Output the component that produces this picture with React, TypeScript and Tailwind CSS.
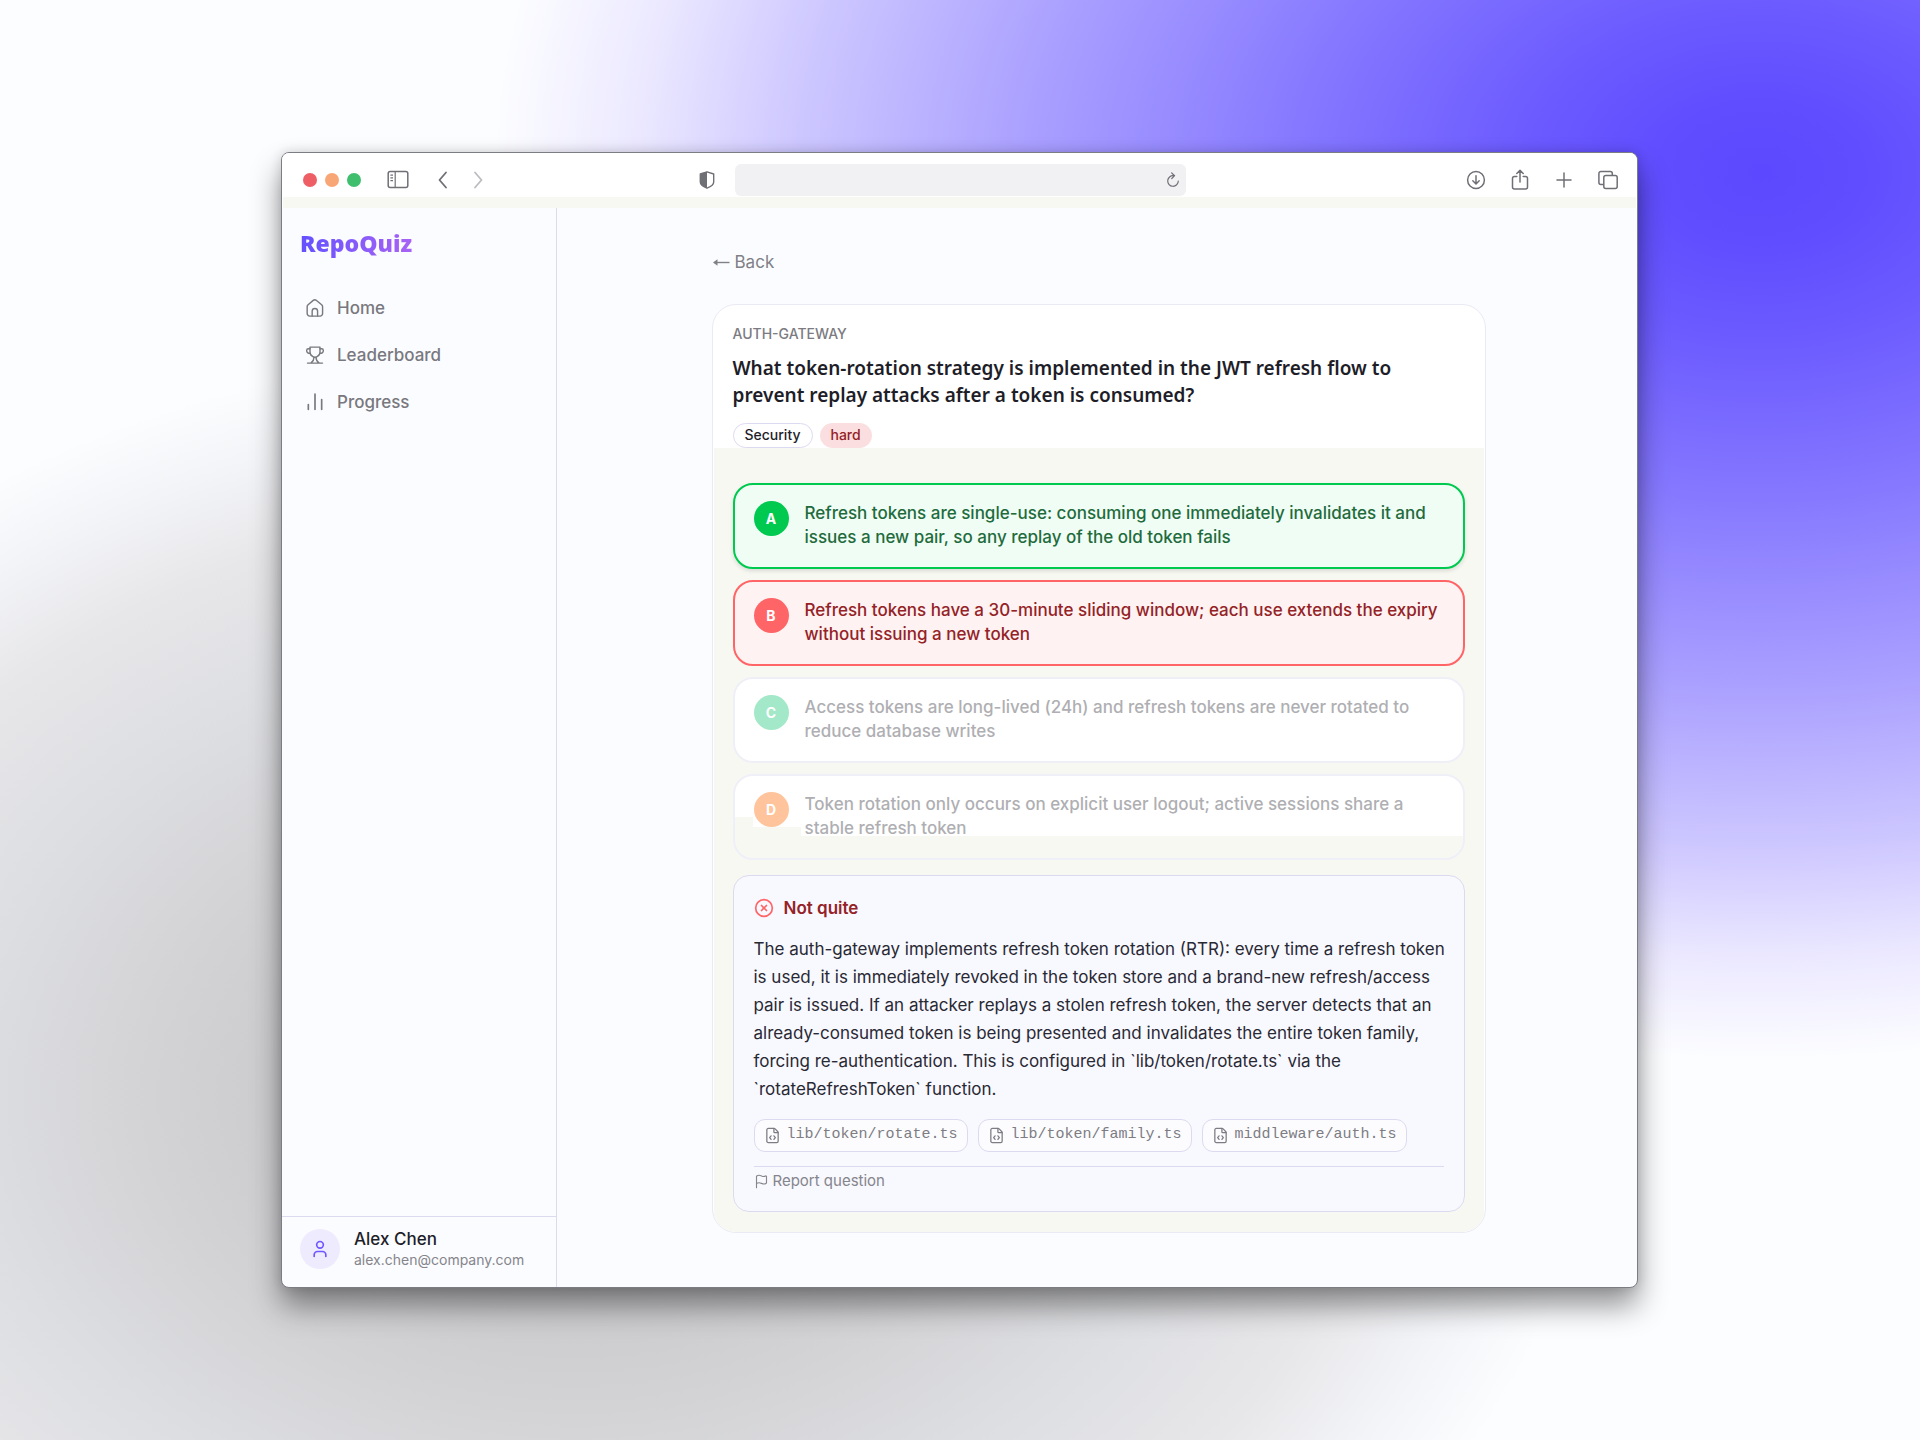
/**
 * RepoQuiz question page
 * Answer review screen shown inside a browser window
 */

import React from 'react';
import clsx from 'clsx';
import { CircleX, FileCode, Flag, User } from 'lucide-react';

type AnswerState = 'correct' | 'wrong' | 'muted' | 'fading';

interface Answer {
  letter: string;
  lines: [string, string];
  state: AnswerState;
  badge: string;
}

const answers: Answer[] = [
  {
    letter: 'A',
    lines: [
      'Refresh tokens are single-use: consuming one immediately invalidates it and',
      'issues a new pair, so any replay of the old token fails',
    ],
    state: 'correct',
    badge: 'bg-[#00c950]',
  },
  {
    letter: 'B',
    lines: [
      'Refresh tokens have a 30-minute sliding window; each use extends the expiry',
      'without issuing a new token',
    ],
    state: 'wrong',
    badge: 'bg-[#ff6467]',
  },
  {
    letter: 'C',
    lines: [
      'Access tokens are long-lived (24h) and refresh tokens are never rotated to',
      'reduce database writes',
    ],
    state: 'muted',
    badge: 'bg-[#a3e8c8]',
  },
  {
    letter: 'D',
    lines: [
      'Token rotation only occurs on explicit user logout; active sessions share a',
      'stable refresh token',
    ],
    state: 'fading',
    badge: 'bg-[#ffc49c]',
  },
];

const answerStyles: Record<AnswerState, string> = {
  correct: 'border-[#00c950] bg-[#f0fdf4] text-[#1f6b3d] shadow-[0_2px_4px_rgba(0,0,0,0.12)]',
  wrong: 'border-[#ff6467] bg-[#fef2f2] text-[#942226]',
  muted: 'border-[#efeff8] bg-white text-[#afafb3]',
  fading:
    'border-[#efeff8] text-[#afafb3] bg-white bg-no-repeat bg-left-bottom bg-[linear-gradient(#f8f8f3,#f8f8f3),linear-gradient(#f8f8f3,#f8f8f3),linear-gradient(#f8f8f3,#f8f8f3)] bg-size-[100%_22px,66px_31px,18px_41px]',
};

const explanation = [
  'The auth-gateway implements refresh token rotation (RTR): every time a refresh token',
  'is used, it is immediately revoked in the token store and a brand-new refresh/access',
  'pair is issued. If an attacker replays a stolen refresh token, the server detects that an',
  'already-consumed token is being presented and invalidates the entire token family,',
  'forcing re-authentication. This is configured in `lib/token/rotate.ts` via the',
  '`rotateRefreshToken` function.',
];

const files = ['lib/token/rotate.ts', 'lib/token/family.ts', 'middleware/auth.ts'];

interface StrokeIconProps {
  children: React.ReactNode;
  className?: string;
  width?: number;
}

const StrokeIcon: React.FC<StrokeIconProps> = ({ children, className, width = 1.5 }) => (
  <svg
    viewBox="0 0 24 24"
    fill="none"
    stroke="currentColor"
    strokeWidth={width}
    strokeLinecap="round"
    strokeLinejoin="round"
    className={clsx('shrink-0', className)}
    aria-hidden="true"
  >
    {children}
  </svg>
);

const navItems = [
  {
    label: 'Home',
    icon: (
      <>
        <path d="M2.6 10.4c0-.9.4-1.7 1.1-2.3l6.2-5.2a3 3 0 0 1 3.9 0L20 8.1c.7.6 1.1 1.4 1.1 2.3v8.3a3 3 0 0 1-3 3H5.600a3 3 0 0 1-3-3z" />
        <path d="M8.600 21.500v-5.600a3.250 3.250 0 0 1 6.500 0v5.600" />
      </>
    ),
  },
  {
    label: 'Leaderboard',
    icon: (
      <>
        <path d="M6 2.500h12v6.200c0 2.600-1.700 4.300-3.500 5.200-.8.500-1.600.8-2.500.8s-1.700-.3-2.500-.8C7.700 13 6 11.300 6 8.700z" />
        <path d="M6 4.500H4.200C2.800 4.500 2 5.300 2 6.500c0 2 1.600 3.500 4.400 3.500M18 4.500h1.800c1.400 0 2.200.8 2.200 2 0 2-1.600 3.500-4.400 3.500" />
        <path d="M10.800 14.700c0 2.600-1 4.800-3.500 6.800M13.200 14.700c0 2.600 1 4.800 3.500 6.800M3 21.700h18" />
      </>
    ),
  },
  {
    label: 'Progress',
    icon: <path d="M4 21v-6M12 21V2.500M20 21V9" strokeWidth={2} />,
  },
];

const Toolbar: React.FC = () => (
  <header className="bg-white">
    <div className="flex items-center pt-[11px] pb-px text-[#6f6f76]">
      {/* Window controls */}
      <div className="flex flex-1 items-center pl-[21px]">
        <div className="flex gap-2">
          <span className="size-[14px] rounded-full bg-[#ee5f65]" />
          <span className="size-[14px] rounded-full bg-[#f9a677]" />
          <span className="size-[14px] rounded-full bg-[#3fbf6e]" />
        </div>
        <button aria-label="Sidebar" className="ml-[26px]">
          <svg width="22" height="20" viewBox="0 0 22 20" fill="none" stroke="currentColor" strokeWidth="1.500">
            <rect x="1.200" y="1.500" width="19.600" height="16" rx="2" />
            <path d="M8.200 1.500v16M3.400 5.200h2.600M3.400 7.900h2.600M3.400 10.600h2.600" strokeWidth="1.200" />
          </svg>
        </button>
        <button aria-label="Previous" className="ml-7">
          <svg width="12" height="18" viewBox="0 0 12 18" fill="none" stroke="currentColor" strokeWidth="1.800" strokeLinecap="round" strokeLinejoin="round">
            <path d="M9 1.500 2.500 9 9 16.500" />
          </svg>
        </button>
        <button aria-label="Next" className="ml-6 text-[#bcbcc0]">
          <svg width="12" height="18" viewBox="0 0 12 18" fill="none" stroke="currentColor" strokeWidth="1.800" strokeLinecap="round" strokeLinejoin="round">
            <path d="M2 1.500 8.500 9 2 16.500" />
          </svg>
        </button>
        <svg width="16" height="18" viewBox="0 0 16 18" className="mr-5 ml-auto" aria-hidden="true">
          <path d="M8 .8 14.700 3v8c0 2.800-2.900 4.700-6.700 6.200C4.200 15.700 1.300 13.800 1.300 11V3z" fill="none" stroke="currentColor" strokeWidth="1.400" strokeLinejoin="round" />
          <path d="M8 .8v16.400C4.200 15.700 1.300 13.800 1.300 11V3z" fill="currentColor" />
        </svg>
      </div>

      {/* Address bar */}
      <div className="flex h-8 w-1/3 items-center rounded-md bg-[#f1f1f3] pr-1.5">
        <input aria-label="Address" className="min-w-0 flex-1 bg-transparent px-3 outline-none" />
        <button aria-label="Reload">
          <svg width="14" height="16" viewBox="0 0 14 16" fill="none" stroke="currentColor" strokeWidth="1.200" strokeLinecap="round" strokeLinejoin="round">
            <path d="M7.500 3.700a5.300 5.300 0 1 0 4.800 5.300M5.600.9 8.600 3.700 5.800 6.500" />
          </svg>
        </button>
      </div>

      {/* Page actions */}
      <div className="flex flex-1 items-center justify-end gap-6 pr-[19px]">
        <button aria-label="Downloads">
          <svg width="20" height="20" viewBox="0 0 20 20" fill="none" stroke="currentColor" strokeWidth="1.500" strokeLinecap="round" strokeLinejoin="round">
            <circle cx="10" cy="10" r="8.400" />
            <path d="M10 5.800v8M6.800 10.800l3.200 3.200 3.200-3.200" />
          </svg>
        </button>
        <button aria-label="Share">
          <svg width="20" height="22" viewBox="0 0 20 22" fill="none" stroke="currentColor" strokeWidth="1.500" strokeLinecap="round" strokeLinejoin="round">
            <path d="M6.800 7.500H4.500a2 2 0 0 0-2 2V18a2 2 0 0 0 2 2h11a2 2 0 0 0 2-2V9.500a2 2 0 0 0-2-2h-2.300M10 13V1.500M6.800 4.500 10 1.300l3.200 3.200" />
          </svg>
        </button>
        <button aria-label="New tab">
          <svg width="20" height="20" viewBox="0 0 20 20" fill="none" stroke="currentColor" strokeWidth="1.500" strokeLinecap="round">
            <path d="M10 3v14M3 10h14" />
          </svg>
        </button>
        <button aria-label="All tabs">
          <svg width="20" height="20" viewBox="0 0 20 20" fill="none" stroke="currentColor" strokeWidth="1.500" strokeLinejoin="round">
            <rect x="5.800" y="5.600" width="13.400" height="13" rx="2" />
            <path d="M5.800 14.500H2.900a2 2 0 0 1-2-2V3.500a2 2 0 0 1 2-2h9.400a2 2 0 0 1 2 2v2" />
          </svg>
        </button>
      </div>
    </div>
    <div className="mx-px h-[11px] bg-[#f8f8f3]" />
  </header>
);

const Sidebar: React.FC = () => (
  <aside className="flex w-[275px] shrink-0 flex-col border-r border-[#dcdaef]">
    <div className="px-[18px] pt-[19px]">
      <span className="bg-linear-to-r from-[#6450ff] to-[#a862f5] bg-clip-text font-['Open_Sans',sans-serif] text-[23px] leading-8 font-extrabold text-transparent">
        RepoQuiz
      </span>
    </div>
    <nav className="mt-[27px] flex flex-col gap-[3px] px-3">
      {navItems.map((item) => (
        <a
          key={item.label}
          href="#"
          className="flex h-11 items-center gap-3 px-[11px] text-[17px] leading-6 font-medium text-[#78787e]"
        >
          <StrokeIcon className="size-5" width={1.7}>
            {item.icon}
          </StrokeIcon>
          {item.label}
        </a>
      ))}
    </nav>
    <div className="mt-auto flex items-center gap-[14px] border-t border-[#dcdaef] px-[18px] pt-[11px] pb-[17px]">
      <div className="flex size-10 shrink-0 items-center justify-center rounded-full bg-[#eeebff]">
        <User className="size-5 text-[#7057ff]" />
      </div>
      <div>
        <p className="text-[17px] leading-[22px] font-medium text-[#1e1e29]">Alex Chen</p>
        <p className="text-sm leading-5 text-[#85858b]">alex.chen@company.com</p>
      </div>
    </div>
  </aside>
);

const AnswerOption: React.FC<{ answer: Answer }> = ({ answer }) => (
  <button
    className={clsx(
      'flex w-full items-start gap-4 rounded-[20px] border-2 px-[19px] pt-4 pb-[18px] text-left',
      answerStyles[answer.state]
    )}
  >
    <span
      className={clsx(
        'flex size-[35px] shrink-0 items-center justify-center rounded-full text-sm font-bold text-white',
        answer.badge
      )}
    >
      {answer.letter}
    </span>
    <span className="text-[17px] leading-6 font-medium">
      {answer.lines[0]}
      <br />
      {answer.lines[1]}
    </span>
  </button>
);

const Explanation: React.FC = () => (
  <section className="mt-[15px] rounded-2xl border border-[#dcdaf0] bg-[#f8f8ff] px-5 py-5">
    <h2 className="flex items-center gap-2.5 text-[17px] leading-6 font-semibold text-[#942226]">
      <CircleX className="size-5 text-[#ff6467]" />
      Not quite
    </h2>
    <p className="mt-[15px] text-[17px] leading-7 text-[#292933]">
      {explanation.map((line) => (
        <span key={line} className="block whitespace-nowrap">
          {line}
        </span>
      ))}
    </p>
    <ul className="mt-4 flex flex-wrap gap-2.5">
      {files.map((file) => (
        <li
          key={file}
          className="flex h-[33px] items-center gap-1.5 rounded-[11px] border border-[#dcdaf0] bg-[#fcfcff] px-[9px] font-['Liberation_Mono',monospace] text-[15px] text-[#7d7d83]"
        >
          <FileCode className="size-[17px]" strokeWidth={1.8} />
          {file}
        </li>
      ))}
    </ul>
    <div className="mt-[14px] border-t border-[#dcdaf0] pt-1">
      <button className="flex items-center gap-1 text-[15px] leading-5 text-[#85858b]">
        <Flag className="size-[15px]" strokeWidth={1.8} />
        Report question
      </button>
    </div>
  </section>
);

const App: React.FC = () => {
  return (
    <div className="flex min-h-screen bg-[#fcfdff] bg-[radial-gradient(66%_61.5%_at_91.7%_12%,#5c49ff_0%,#604dff_8%,#6c5bff_19%,#8577ff_36%,#aaa0ff_58%,#cdc7ff_76%,rgba(234,231,255,0.9)_89%,rgba(252,253,255,0)_100%),radial-gradient(53%_52%_at_30%_76%,#c0c0c3_0%,#cacacd_25%,#d3d3d6_42%,#dddee1_60%,#e7e7ea_78%,rgba(242,243,246,0.9)_90%,rgba(252,253,255,0)_100%)] pt-[152px] pr-[282px] pb-[152px] pl-[281px] font-['Inter',sans-serif] antialiased">
      <div className="flex flex-1 flex-col overflow-hidden rounded-lg border border-[#7c7c84] bg-[#fbfcff] shadow-[0_18px_30px_rgba(0,0,0,0.42),0_0_12px_rgba(0,0,0,0.14)]">
        <Toolbar />
        <div className="flex flex-1">
          <Sidebar />
          <main className="min-w-0 flex-1 pt-[42px] pb-[53px] pl-[3px]">
            <div className="mx-auto max-w-[774px]">
              <a href="#" className="flex items-center gap-[5px] text-[17px] leading-6 text-[#808086]">
                <svg width="18" height="10" viewBox="0 0 18 10" aria-hidden="true">
                  <path d="M4 5.500h13.500" stroke="currentColor" strokeWidth="1.400" />
                  <path d="M1 5.500 5.500 2.200v6.600z" fill="currentColor" />
                </svg>
                Back
              </a>

              {/* Question card */}
              <article className="mt-[30px] overflow-hidden rounded-3xl border border-[#eaeaf5] bg-white">
                <div className="px-5 pt-[19px]">
                  <p className="text-sm leading-5 font-medium text-[#7b7b81]">AUTH-GATEWAY</p>
                  <h1 className="mt-[11px] font-['Noto_Sans','Open_Sans',sans-serif] text-[19px] leading-[27px] font-semibold text-[#1e1e29]">
                    What token-rotation strategy is implemented in the JWT refresh flow to
                    <br />
                    prevent replay attacks after a token is consumed?
                  </h1>
                  <div className="mt-[14px] flex gap-[7px] text-sm font-medium">
                    <span className="rounded-full border border-[#dcdaf0] px-[11px] pb-px leading-[22px] text-[#1e1e29]">
                      Security
                    </span>
                    <span className="rounded-full bg-[#fbdfe0] px-[11px] pb-px leading-6 text-[#942226]">
                      hard
                    </span>
                  </div>
                </div>
                <div className="mx-px bg-[#f8f8f3] px-[19px] pt-[35px] pb-5">
                  <div className="flex flex-col gap-[11px]">
                    {answers.map((answer) => (
                      <AnswerOption key={answer.letter} answer={answer} />
                    ))}
                  </div>
                  <Explanation />
                </div>
              </article>
            </div>
          </main>
        </div>
      </div>
    </div>
  );
};

export default App;
